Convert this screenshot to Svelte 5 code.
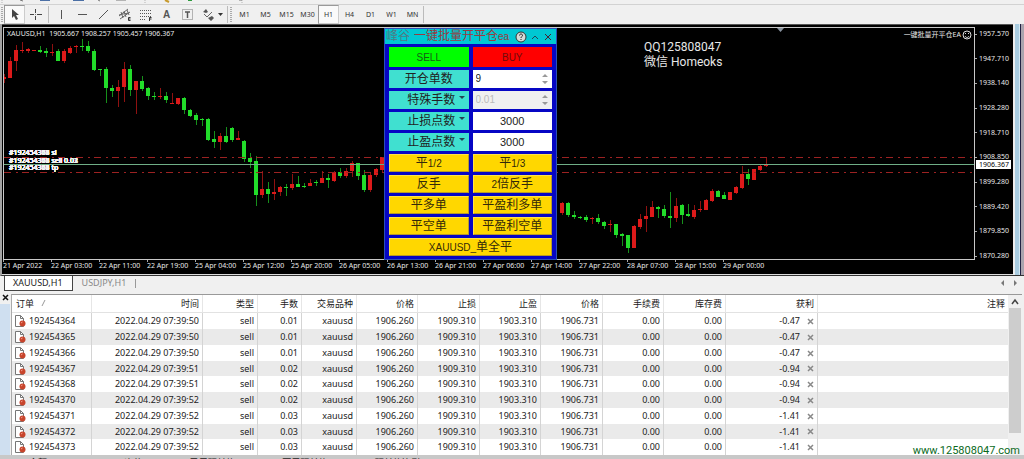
<script>
  const timeframes = ['M1', 'M5', 'M15', 'M30', 'H1', 'H4', 'D1', 'W1', 'MN'];
  let timeframe = $state('H1');

  // [x, body top, body bottom, high, low, direction]
  const candles = [
    [4, 77, 79, 74, 83, 'r'], [10, 61, 78, 57, 78, 'r'], [16, 50, 61, 45, 71, 'r'], [22, 50, 51, 42, 53, 'r'],
    [28, 49, 51, 48, 53, 'r'], [34, 50, 51, 50, 51, 'r'], [40, 50, 52, 46, 53, 'g'], [46, 51, 53, 48, 57, 'g'],
    [52, 52, 53, 44, 56, 'r'], [58, 51, 61, 49, 61, 'g'], [64, 51, 61, 49, 63, 'r'], [70, 48, 53, 46, 54, 'r'],
    [76, 46, 47, 45, 53, 'r'], [82, 46, 47, 39, 51, 'g'], [88, 46, 51, 41, 53, 'g'], [94, 51, 70, 49, 71, 'g'],
    [100, 69, 70, 69, 76, 'g'], [106, 69, 88, 67, 103, 'g'], [112, 88, 91, 85, 97, 'g'], [118, 87, 91, 80, 107, 'r'],
    [124, 69, 87, 62, 102, 'r'], [130, 69, 90, 65, 96, 'g'], [136, 81, 90, 81, 114, 'r'], [142, 81, 89, 76, 91, 'g'],
    [148, 88, 96, 87, 100, 'g'], [154, 96, 97, 92, 100, 'g'], [160, 96, 97, 88, 99, 'r'], [166, 96, 100, 92, 103, 'g'],
    [172, 103, 104, 93, 104, 'r'], [178, 98, 104, 98, 105, 'r'], [184, 98, 110, 97, 114, 'g'], [190, 110, 116, 109, 117, 'g'],
    [196, 115, 120, 113, 125, 'g'], [202, 119, 120, 118, 126, 'g'], [208, 119, 140, 118, 141, 'g'], [214, 139, 142, 131, 148, 'g'],
    [220, 136, 142, 133, 150, 'r'], [226, 136, 142, 127, 143, 'g'], [232, 128, 140, 127, 142, 'g'], [238, 138, 140, 131, 140, 'r'],
    [244, 141, 159, 140, 162, 'g'], [250, 158, 162, 153, 168, 'g'], [256, 161, 195, 156, 206, 'g'], [262, 189, 195, 171, 198, 'r'],
    [268, 189, 194, 182, 203, 'g'], [274, 192, 194, 179, 200, 'r'], [280, 187, 192, 186, 196, 'r'], [286, 187, 188, 184, 196, 'g'],
    [292, 184, 188, 174, 190, 'r'], [298, 184, 187, 176, 187, 'g'], [304, 186, 187, 183, 188, 'g'], [310, 183, 186, 179, 186, 'r'],
    [316, 182, 183, 180, 186, 'g'], [322, 178, 183, 171, 183, 'r'], [328, 178, 180, 174, 188, 'g'], [334, 172, 181, 171, 182, 'r'],
    [340, 172, 176, 168, 178, 'g'], [346, 171, 176, 168, 178, 'r'], [352, 163, 171, 161, 177, 'r'], [358, 163, 176, 163, 180, 'g'],
    [364, 175, 190, 170, 192, 'g'], [370, 175, 190, 172, 192, 'r'], [376, 169, 175, 168, 177, 'r'], [382, 157, 170, 157, 172, 'r'],
    [562, 203, 213, 202, 215, 'r'], [568, 203, 215, 202, 217, 'g'], [574, 215, 217, 211, 219, 'g'], [580, 217, 218, 216, 219, 'g'],
    [586, 217, 220, 215, 222, 'g'], [592, 218, 219, 217, 224, 'r'], [598, 218, 222, 214, 224, 'g'], [604, 222, 226, 221, 229, 'g'],
    [610, 224, 225, 220, 232, 'r'], [616, 224, 235, 224, 238, 'g'], [622, 234, 236, 233, 246, 'g'], [628, 235, 248, 235, 253, 'g'],
    [634, 226, 248, 225, 248, 'r'], [640, 219, 227, 214, 229, 'r'], [646, 216, 219, 206, 232, 'r'], [652, 207, 217, 201, 217, 'r'],
    [658, 207, 209, 206, 218, 'g'], [664, 209, 216, 205, 218, 'g'], [670, 216, 218, 192, 228, 'g'], [676, 206, 218, 198, 222, 'r'],
    [682, 205, 215, 204, 224, 'g'], [688, 214, 216, 204, 217, 'g'], [694, 210, 217, 205, 219, 'r'], [700, 209, 210, 201, 212, 'r'],
    [706, 200, 210, 199, 210, 'r'], [712, 191, 201, 189, 202, 'r'], [718, 191, 197, 190, 197, 'g'], [724, 195, 199, 192, 199, 'g'],
    [730, 192, 200, 192, 200, 'r'], [736, 187, 193, 186, 194, 'r'], [742, 174, 188, 166, 189, 'r'], [748, 174, 179, 169, 185, 'g'],
    [754, 169, 180, 169, 180, 'r'], [760, 166, 170, 165, 171, 'r'], [766, 164, 166, 158, 167, 'r']
  ];

  const prices = ['1957.570', '1947.710', '1938.140', '1928.280', '1918.710', '1908.850', '1899.280', '1889.420', '1879.850', '1870.280'];
  const times = [
    '21 Apr 2022', '22 Apr 03:00', '22 Apr 11:00', '22 Apr 19:00', '25 Apr 04:00', '25 Apr 12:00', '25 Apr 20:00', '26 Apr 05:00',
    '26 Apr 13:00', '26 Apr 21:00', '27 Apr 06:00', '27 Apr 14:00', '27 Apr 22:00', '28 Apr 07:00', '28 Apr 15:00', '29 Apr 00:00'
  ];

  const columns = ['时间', '类型', '手数', '交易品种', '价格', '止损', '止盈', '价格', '手续费', '库存费', '获利', '注释'];
  const widths = [80, 111, 55, 44, 55, 61, 62, 61, 62, 61, 62, 92];
  const orders = [
    ['192454364', '50', '0.01', '-0.47'],
    ['192454365', '50', '0.01', '-0.47'],
    ['192454366', '50', '0.01', '-0.47'],
    ['192454367', '51', '0.02', '-0.94'],
    ['192454368', '51', '0.02', '-0.94'],
    ['192454370', '52', '0.02', '-0.94'],
    ['192454371', '52', '0.03', '-1.41'],
    ['192454372', '52', '0.03', '-1.41'],
    ['192454373', '52', '0.03', '-1.41']
  ];

  const actions = ['平1/2', '平1/3', '反手', '2倍反手', '平多单', '平盈利多单', '平空单', '平盈利空单'];
  let count = $state(9);
</script>

<div class="app">
  <div class="upper" aria-hidden="true">
    <svg width="260" height="4">
      <path d="M2 0V3M145 0V3M242 0V3" stroke="#b5b5b5" stroke-dasharray="1 1" />
      <path d="M40 0h10v1h-10zM73 0h11v1h-11z" fill="#4b6fa5" />
      <path d="M20 0l3 1M98 0l2 1M116 0h10M239 0h3" stroke="#777" />
      <path d="M165 0l4 2" stroke="#c79a2c" stroke-width="2" />
      <path d="M188 0h4v1h-4z" fill="#2e9b3e" />
    </svg>
  </div>

  <div class="toolbar">
    <span class="grip"></span>
    <button class="tool on" aria-label="Cursor"><svg width="17" height="17"><path d="M6 3v9l2-2 2 4 2-1-2-4h3z" fill="#444" /></svg></button>
    <button class="tool" aria-label="Crosshair"><svg width="17" height="17"><path d="M8.500 3v4M8.500 10v4M3 8.500h4M10 8.500h5" stroke="#444" /><path d="M8 8h1v1H8z" fill="#888" /></svg></button>
    <span class="sep"></span>
    <button class="tool" aria-label="Vertical line"><svg width="17" height="17"><path d="M8.500 4v9" stroke="#555" /></svg></button>
    <button class="tool" aria-label="Horizontal line"><svg width="17" height="17"><path d="M4 8.500h9" stroke="#555" /></svg></button>
    <button class="tool" aria-label="Trendline"><svg width="17" height="17"><path d="M4 13L13 4" stroke="#555" /></svg></button>
    <button class="tool" aria-label="Channel"><svg width="17" height="17"><path d="M3 10L12 3M4 13L14 6M5 6l2 6M8 5l2 6M11 4l2 5M3 9l4-1M7 8l6-1" stroke="#666" fill="none" /><path d="M14.500 11.500h-2v3h2M12.500 13h2" stroke="#333" fill="none" /></svg></button>
    <button class="tool" aria-label="Fibonacci"><svg width="17" height="17"><path d="M3 4.500h11M3 7.500h11M3 10.500h11M3 13.500h6" stroke="#555" stroke-dasharray="1 1" /><path d="M12.500 15v-3.500h2M12.500 13h2" stroke="#333" fill="none" /></svg></button>
    <button class="tool letter">A</button>
    <button class="tool" aria-label="Text label"><svg width="17" height="17"><rect x="3.500" y="3.500" width="10" height="10" fill="none" stroke="#777" stroke-dasharray="1 1" /><path d="M6 6h5M8.500 6v6" stroke="#555" stroke-width="1.500" /></svg></button>
    <button class="tool wide" aria-label="Arrows"><svg width="28" height="17"><path d="M4 6l3-3 2 3-2 1zM9 12l4-2 2 2-3 3z" fill="#555" /><path d="M5 8l3 3 5-5" stroke="#666" fill="none" /><path d="M19 7h5l-2.500 3z" fill="#333" /></svg></button>
    <span class="sep thin"></span>
    <span class="grip second"></span>
    {#each timeframes as t}
      <button class="tool" class:on={t === timeframe} onclick={() => (timeframe = t)}>{t}</button>
    {/each}
    <span class="sep thin"></span>
  </div>

  <div class="frame">
    <div class="chart">
      <div class="plot">
        <svg class="canvas" width="100%" height="231">
          <g transform="translate(-4 -28)">
            <g shape-rendering="crispEdges">
              {#each candles as [x, top, bottom, high, low, dir]}
                <rect class={'wick ' + dir} {x} y={high} width="1" height={low - high} />
                <rect class={dir} x={x - 2} y={top} width="4" height={Math.max(bottom - top, 1)} />
              {/each}
            </g>
            <path d="M777 28h7l-3.500 4z" fill="#8a94a0" />
          </g>
          <line class="stop" x1="0" x2="100%" y1="129.500" y2="129.500" />
          <line class="entry" x1="0" x2="100%" y1="136.500" y2="136.500" />
          <line class="stop" x1="0" x2="100%" y1="144.500" y2="144.500" />
          {#each orders as [id, , lots]}
            <text x="5" y="127">#{id} sl</text>
            <text x="5" y="135">#{id} sell {lots}</text>
            <text x="5" y="142">#{id} tp</text>
          {/each}
        </svg>
        <div class="quote">XAUUSD,H1&nbsp; 1905.667 1908.257 1905.457 1906.367</div>
        <div class="expert">
          一键批量开平仓EA
          <svg width="10" height="10"><circle cx="5" cy="5" r="4" fill="none" stroke="#ddd" /><path d="M3 6c1 2 3 2 4 0M3 3.500h1M6 3.500h1" stroke="#ddd" fill="none" /></svg>
        </div>
        <div class="contact">QQ125808047<br />微信 Homeoks</div>
      </div>
      <div class="prices">
        {#each prices as p}<span>{p}</span>{/each}
        <b>1906.367</b>
      </div>
      <div class="times">
        {#each times as t}<span>{t}</span>{/each}
      </div>

      <section class="panel">
        <header>
          <span class="brand">峰谷</span><span class="name">一键批量开平仓<small>ea</small></span>
          <button aria-label="Help"><svg width="12" height="12"><circle cx="6" cy="6" r="5" fill="#d5dcd8" stroke="#333" /><path d="M4.500 4.500c0-2 3-2 3 0 0 1-1.500 1-1.500 2.500M6 8v1" stroke="#222" fill="none" /></svg></button>
          <button aria-label="Minimise"><svg width="10" height="12"><path d="M2 8l3-3 3 3" stroke="#245" fill="none" /></svg></button>
          <button aria-label="Close"><svg width="10" height="12"><path d="M2 3l6 6M8 3L2 9" stroke="#423" fill="none" /></svg></button>
        </header>
        <div class="grid">
          <button class="sell"><small>SELL</small></button>
          <button class="buy"><small>BUY</small></button>
          <label class="teal" for="count">开仓单数</label>
          <div class="spin">
            <input id="count" type="text" bind:value={count} />
            <svg width="8" height="14"><path d="M1 5l3-3 3 3zM1 9l3 3 3-3z" fill="#999" /></svg>
          </div>
          <div class="drop"><select aria-label="手数"><option>特殊手数</option></select><i></i></div>
          <div class="spin off">
            <input type="text" value="0.01" disabled aria-label="特殊手数" />
            <svg width="8" height="14"><path d="M1 5l3-3 3 3zM1 9l3 3 3-3z" fill="#999" /></svg>
          </div>
          <div class="drop"><select aria-label="止损"><option>止损点数</option></select><i></i></div>
          <input class="points" type="text" value="3000" aria-label="止损点数" />
          <div class="drop"><select aria-label="止盈"><option>止盈点数</option></select><i></i></div>
          <input class="points" type="text" value="3000" aria-label="止盈点数" />
          {#each actions as a}
            <button class="gold">{#each a.split(/([\d/]+)/) as part}{#if /\d/.test(part)}<small>{part}</small>{:else}{part}{/if}{/each}</button>
          {/each}
          <button class="gold all"><small>XAUUSD_</small>单全平</button>
        </div>
      </section>
    </div>
    <div class="edge"></div>
  </div>

  <nav class="tabs">
    <a class="active" href="#xauusd">XAUUSD,H1</a>
    <a href="#usdjpy">USDJPY,H1</a>
    <svg width="18" height="8"><path d="M4 1v6L1 4zM14 1v6l3-3z" fill="#777" /></svg>
  </nav>

  <div class="terminal">
    <div class="side"><button aria-label="Close terminal"><svg width="7" height="7"><path d="M1 1l5 5M6 1L1 6" stroke="#111" stroke-width="1.500" /></svg></button></div>
    <table>
      <colgroup>
        {#each widths as w}<col style:width="{w}px" />{/each}
        <col />
      </colgroup>
      <thead>
        <tr>
          <th class="id">订单 <svg width="6" height="8"><path d="M1 7l3-6" stroke="#999" /></svg></th>
          {#each columns as c}<th>{c}</th>{/each}
        </tr>
      </thead>
      <tbody>
        {#each orders as [id, sec, lots, profit]}
          <tr>
            <td class="id"><span class="cell">
              <svg width="12" height="12"><path d="M1.500 .5h5l3 3v8h-8z" fill="#fff" stroke="#777" /><path d="M6.500 .5v3h3" fill="none" stroke="#777" /><circle cx="8.500" cy="8.500" r="3" fill="#c8452c" /><path d="M7 8l1.500-1" stroke="#f0a090" /></svg>
              {id}</span></td>
            <td>2022.04.29 07:39:{sec}</td>
            <td>sell</td>
            <td>{lots}</td>
            <td>xauusd</td>
            <td>1906.260</td>
            <td>1909.310</td>
            <td>1903.310</td>
            <td>1906.731</td>
            <td>0.00</td>
            <td>0.00</td>
            <td><span class="cell end">{profit}<button aria-label="Close order {id}"><svg width="7" height="7"><path d="M1 1l5 5M6 1L1 6" stroke="#888" stroke-width="1.500" /></svg></button></span></td>
            <td></td>
          </tr>
        {/each}
      </tbody>
    </table>
    <div class="scroll">
      <svg width="14" height="13"><path d="M4 9l3-4 3 4" stroke="#444" stroke-width="1.500" fill="none" /></svg>
      <div class="thumb"></div>
    </div>
  </div>

  <footer>
    <span>余额:</span><span>净值:</span><span>已用预付款:</span><span>可用预付款:</span><span>预付款比例:</span>
  </footer>
  <a class="site" href="#site">www.125808047.com</a>
</div>

<style>
  :global(body) { background: #f0f0f0; }
  .app {
    position: relative;
    height: 100vh;
    overflow: hidden;
    display: flex;
    flex-direction: column;
    font-family: "Noto Sans", "Noto Sans CJK SC", sans-serif;
    font-size: 9px;
    line-height: 12px;
    color: #222;
    background: #f0f0f0;
  }
  .app > * { flex-shrink: 0; }
  svg { display: block; flex-shrink: 0; }
  button, input, select {
    font: inherit;
    color: inherit;
    margin: 0;
    padding: 0;
    border: 0;
    background: none;
    border-radius: 0;
    min-width: 0;
    box-sizing: border-box;
  }
  a { color: inherit; text-decoration: none; }

  .upper { height: 4px; border-bottom: 1px solid #d2d2d2; }
  .toolbar { display: flex; align-items: center; height: 19px; font-size: 7px; color: #333; }
  .grip { width: 2px; height: 15px; margin: 0 1px; background: repeating-linear-gradient(#aaa 0 1px, transparent 1px 2px); }
  .grip.second { margin: 0 2px; }
  .tool { width: 21px; height: 19px; display: flex; align-items: center; justify-content: center; }
  .tool.wide { width: 29px; }
  .tool.on { background: #fafafa; border: 1px solid #ccc; border-top-color: #999; border-left-color: #999; }
  .letter { font: bold 10px "Liberation Sans", sans-serif; color: #555; }
  .sep { width: 1px; height: 17px; margin: 0 2px; background: #bbb; }
  .sep.thin { margin: 0; }

  .frame { display: flex; border-left: 2px solid #a2a2a2; border-bottom: 1px solid #333; }
  .chart {
    position: relative;
    flex: 1;
    min-width: 0;
    display: grid;
    grid-template-columns: minmax(0, 1fr) 38px;
    padding: 2px 0 0 1px;
    border-top: 1px solid #555;
    border-bottom: 1px solid #ddd;
    background: #000;
    color: #e8e8e8;
    font-size: 7px;
    line-height: 8px;
  }
  .plot { position: relative; border: 1px solid #c8c8c8; }
  .canvas { overflow: hidden; }
  .canvas text { fill: #f4f4f4; font-size: 7px; }
  .r { fill: #dc1a1a; }
  .g { fill: #22dd2a; }
  .wick { opacity: 0.65; }
  .stop { stroke: #9c2222; stroke-dasharray: 7 5 2 4; }
  .entry { stroke: #6fae86; }
  .quote { position: absolute; left: 3px; top: 2px; }
  .expert { position: absolute; right: 2px; top: 2px; display: flex; align-items: center; gap: 1px; }
  .contact { position: absolute; left: 640px; top: 12px; font: 12px/15px Roboto, "Noto Sans CJK SC", sans-serif; }
  .prices { position: relative; display: flex; flex-direction: column; justify-content: space-between; padding-top: 3px; height: 230px; }
  .prices span::before { content: ""; display: inline-block; width: 2px; height: 1px; margin-right: 2px; background: #aaa; vertical-align: middle; }
  .prices b { position: absolute; left: 1px; right: 2px; top: 133px; padding-left: 3px; font-weight: 400; line-height: 9px; background: #fff; color: #000; }
  .times { grid-column: 1 / -1; display: flex; height: 14px; overflow: hidden; }
  .times span { flex: 0 0 48px; white-space: nowrap; }
  .times span::before { content: ""; display: block; width: 1px; height: 2px; background: #aaa; }
  .edge { width: 11px; background: linear-gradient(90deg, #eee 2px, #a9cce0 2px 6px, #d5e8f2 6px, #d5e8f2 7px, #224 7px 8px, #aaa4ae 8px); }

  .panel {
    position: absolute;
    left: 382px;
    top: 3px;
    width: 173px;
    box-sizing: border-box;
    border: 1px solid #2b50b8;
    background: #0606c4;
    color: #222;
    font: 12px/18px "Liberation Sans", "Noto Sans CJK SC", sans-serif;
  }
  .panel small { font-size: 10px; }
  .panel header { display: flex; align-items: center; height: 15px; background: #00c8d2; line-height: 15px; white-space: nowrap; }
  .brand { color: #4f7a84; margin: 0 4px 0 1px; }
  .name { color: #9a3a40; flex: 1; }
  .panel header button { margin-right: 3px; }
  .grid { display: grid; grid-template-columns: repeat(2, minmax(0, 1fr)); grid-template-rows: 20px; grid-auto-rows: 18px; gap: 3px 4px; padding: 3px 4px; }
  .grid > * { width: 100%; }
  .sell { background: #00ff00; color: #175a17; }
  .buy { background: #ff0000; color: #6e0c0c; }
  .teal, .drop { background: #40e0d0; text-align: center; }
  .drop { position: relative; }
  .drop select { width: 100%; height: 18px; appearance: none; text-align: center; text-align-last: center; display: block; padding-left: 5px; }
  .drop i { position: absolute; right: 4px; top: 5px; border: 3px solid transparent; border-top-color: #245; border-bottom: 0; }
  .spin { display: flex; align-items: center; background: #fff; padding-right: 3px; box-sizing: border-box; }
  .spin input { flex: 1; padding-left: 3px; font-size: 10px; }
  .spin.off { background: #f0f0f0; color: #bbb; }
  .points { background: #fff; text-align: center; font-size: 11px; }
  .gold { background: #ffd700; border: 1px solid #b89a28; border-top-color: #ffe34a; border-left-color: #ffe34a; line-height: 16px; color: #33290a; }
  .all { grid-column: 1 / -1; }

  .tabs { display: flex; align-items: flex-start; height: 18px; font-size: 9px; padding-left: 4px; }
  .tabs a { padding: 1px 9px; line-height: 12px; color: #888; }
  .tabs a.active { color: #222; background: #fff; border: 1px solid #444; border-top: 0; padding-left: 8px; }
  .tabs a:not(.active)::after { content: ""; display: inline-block; height: 9px; border-right: 1px solid #999; margin-left: 9px; vertical-align: middle; }
  .tabs svg { margin: 3px 6px 0 auto; }

  .terminal { display: flex; }
  .side { width: 10px; background: linear-gradient(#f0f0f0 10px, #cfdff0 10px); margin-right: 1px; }
  .side button { display: block; margin: 0 0 0 2px; }
  table { flex: 1; width: 0; table-layout: fixed; border-spacing: 0; border-top: 1px solid #999; border-left: 1px solid #aaa; background: #fff; }
  th, td { padding: 0 3px 0 0; text-align: right; font-weight: 400; border-right: 1px solid #d4d4d4; white-space: nowrap; box-sizing: border-box; }
  th { height: 18px; border-bottom: 1px solid #e2e2e2; border-right-color: #e6e6e6; }
  td { height: 16px; }
  tr:nth-child(4n) td { height: 15px; }
  tbody tr:nth-child(even) { background: #eaeaea; }
  th:last-child, td:last-child { border-right: 0; }
  .id { text-align: left; padding-left: 2px; }
  th.id { padding-left: 4px; }
  th svg { display: inline-block; margin-left: 5px; }
  .cell { display: flex; align-items: center; gap: 3px; }
  .end { justify-content: flex-end; gap: 7px; }
  .scroll { width: 14px; margin-right: 2px; border-top: 1px solid #999; background: #f0f0f0; }
  .thumb { height: 125px; margin: 0 1px; background: #cdcdcd; }

  footer { display: flex; gap: 45px; padding-left: 29px; height: 16px; background: #c8c8c8; line-height: 16px; }
  footer span:first-child { margin-right: 30px; }
  .site { position: absolute; right: 4px; bottom: 2px; font: 11px/13px Roboto, sans-serif; color: #0a6a1c; }
</style>
